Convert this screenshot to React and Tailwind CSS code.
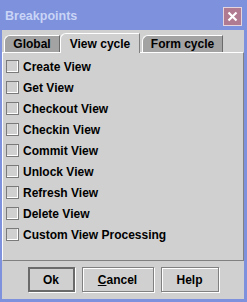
import React from "react";

const items = [
    "Create View",
    "Get View",
    "Checkout View",
    "Checkin View",
    "Commit View",
    "Unlock View",
    "Refresh View",
    "Delete View",
    "Custom View Processing",
];

const font = { fontFamily: '"Liberation Sans", Arial, sans-serif' };

const Tab = ({ label, active, w }) => (
    <div
        className={
            active
                ? "relative z-10 h-[20px] mb-[-1px] flex items-center justify-center bg-[#d0d0d0] border-l border-t border-r border-l-white border-t-white border-r-[#808080] rounded-tl-[6px] text-black"
                : "h-[17px] flex items-center justify-center bg-[#a3a3a3] border-l border-t border-r border-l-white border-t-white border-r-[#6a6a6a] rounded-tl-[6px] text-black"
        }
        style={{ width: w }}
    >
        {label}
    </div>
);

const Check = ({ label }) => (
    <div className="flex items-center h-[21px] pl-[3px]">
        <div className="w-[13px] h-[13px] border border-[#7a7a7a] shadow-[inset_-1px_-1px_0_#ffffff] bg-[#d0d0d0] mr-[4px]" />
        <span>{label}</span>
    </div>
);

const Btn = ({ children, w, def }) => (
    <button
        className={
            "h-[25px] bg-[#d0d0d0] border text-[12px] font-bold text-black " +
            (def
                ? "border-[#6a6a6a] border-2 shadow-[1px_1px_0_#ffffff]"
                : "border-[#808080] shadow-[1px_1px_0_#ffffff,inset_1px_1px_0_#ffffff]")
        }
        style={{ width: w }}
    >
        {children}
    </button>
);

export default function App() {
    return (
        <div
            className="w-[247px] h-[302px] bg-[#7d91dc] flex flex-col pl-[2px] pr-[3px] pb-[3px] text-[12px] font-bold"
            style={font}
        >
            {/* title bar */}
            <div className="h-[30px] flex items-center justify-between pl-[3px] pr-[2px] pt-[3px] shrink-0">
                <span className="text-[#c9d4f6] text-[12.5px] font-bold">Breakpoints</span>
                <div className="w-[19px] h-[19px] bg-[#b07a90] border border-[#e6d4dc] flex items-center justify-center">
                    <svg width="11" height="11" viewBox="0 0 11 11">
                        <path d="M1.5 1.5 L9.5 9.5 M9.5 1.5 L1.5 9.5" stroke="#ffffff" strokeWidth="2.2" />
                    </svg>
                </div>
            </div>

            {/* body */}
            <div className="flex-1 bg-[#d0d0d0] flex flex-col">
                <div className="flex items-end pl-[2px] h-[22px]">
                    <Tab label="Global" w={56} />
                    <Tab label="View cycle" w={80} active />
                    <div className="w-[2px]" />
                    <Tab label="Form cycle" w={81} />
                </div>
                <div className="h-[209px] border-t border-t-white border-l border-l-white border-b border-b-[#808080] border-r border-r-[#808080] pt-[3px]">
                    {items.map((t) => (
                        <Check key={t} label={t} />
                    ))}
                </div>
                <div className="flex justify-center gap-[7px] pt-[6px]">
                    <Btn w={47} def>
                        Ok
                    </Btn>
                    <Btn w={72}>
                        <span className="underline">C</span>ancel
                    </Btn>
                    <Btn w={58}>Help</Btn>
                </div>
            </div>
        </div>
    );
}
